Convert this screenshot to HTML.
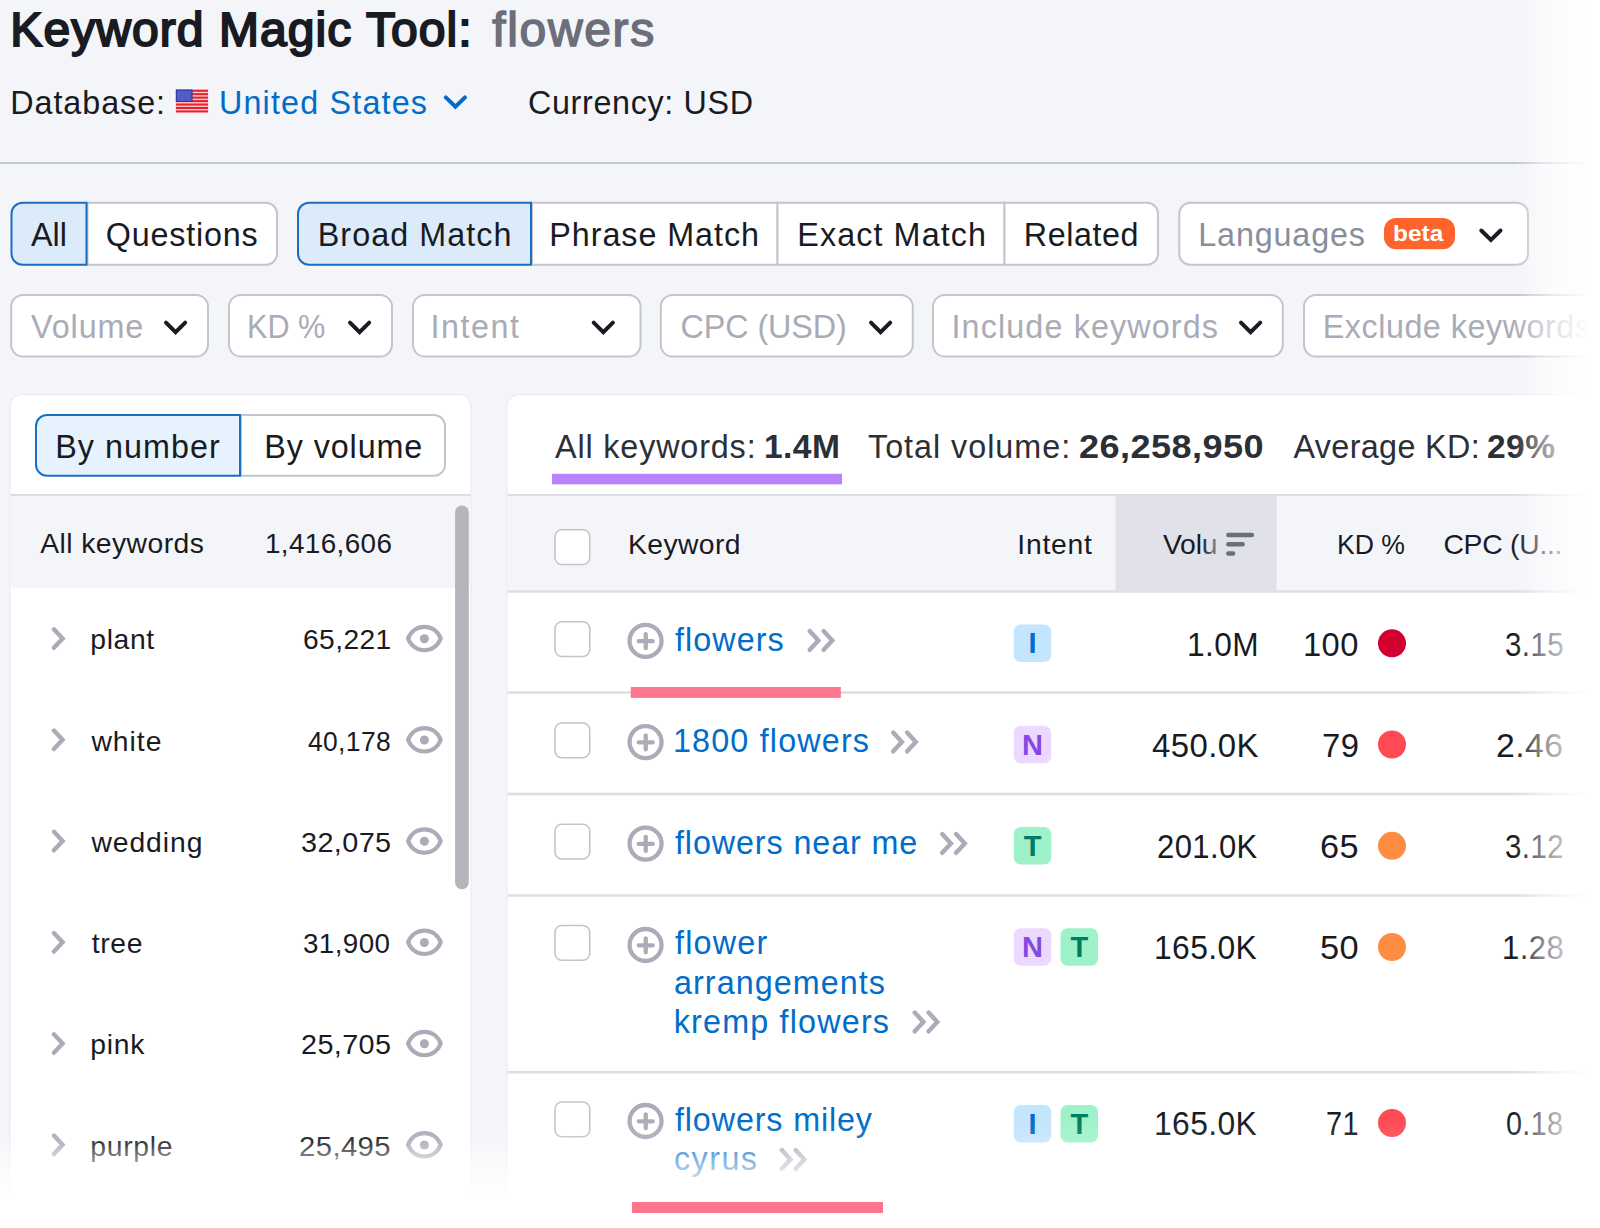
<!DOCTYPE html>
<html><head><meta charset="utf-8"><title>Keyword Magic Tool</title>
<style>
html,body{margin:0;padding:0;}
body{width:1600px;height:1228px;overflow:hidden;position:relative;background:#f4f5f9;font-family:"Liberation Sans",sans-serif;}
.t{position:absolute;white-space:nowrap;line-height:1;transform-origin:0 0;font-family:"Liberation Sans",sans-serif;}
.fr{position:absolute;left:1510px;top:0;width:90px;height:1228px;background:linear-gradient(to right,rgba(255,255,255,0) 2px,rgba(255,255,255,0.12) 12px,rgba(255,255,255,0.25) 20px,rgba(255,255,255,0.4) 27px,rgba(255,255,255,0.52) 35px,rgba(255,255,255,0.64) 45px,rgba(255,255,255,0.75) 55px,rgba(255,255,255,0.85) 65px,rgba(255,255,255,0.94) 75px,rgba(255,255,255,1) 82px,rgba(255,255,255,1) 90px);}
.fb{position:absolute;left:0;top:1115px;width:1600px;height:113px;background:linear-gradient(to bottom,rgba(255,255,255,0) 3px,rgba(255,255,255,0.05) 13px,rgba(255,255,255,0.11) 25px,rgba(255,255,255,0.19) 31px,rgba(255,255,255,0.36) 37px,rgba(255,255,255,0.5) 45px,rgba(255,255,255,0.62) 54px,rgba(255,255,255,0.74) 63px,rgba(255,255,255,0.87) 73px,rgba(255,255,255,1) 84px,rgba(255,255,255,1) 113px);}
.uf{position:absolute;left:1200px;top:528px;width:19px;height:32px;background:linear-gradient(to right,rgba(224,225,233,0) 0,rgba(224,225,233,.15) 5px,rgba(224,225,233,.62) 19px);}
.pb{position:absolute;left:631.75px;top:1202px;width:251.25px;height:11px;background:#fd768d;}
</style></head><body>
<svg width="1600" height="1228" viewBox="0 0 1600 1228" style="position:absolute;left:0;top:0"><rect x="0" y="0" width="1600" height="1228" fill="#f4f5f9"/>
<rect x="0" y="162" width="1600" height="2" fill="#c6c8d1"/>
<rect x="175.9" y="89.7" width="32.2" height="22.75" fill="#ffc9c9"/>
<rect x="175.9" y="89.70" width="32.2" height="2.05" fill="#e3222b"/>
<rect x="175.9" y="93.15" width="32.2" height="2.05" fill="#e3222b"/>
<rect x="175.9" y="96.60" width="32.2" height="2.05" fill="#e3222b"/>
<rect x="175.9" y="100.05" width="32.2" height="2.05" fill="#e3222b"/>
<rect x="175.9" y="103.50" width="32.2" height="2.05" fill="#e3222b"/>
<rect x="175.9" y="106.95" width="32.2" height="2.05" fill="#e3222b"/>
<rect x="175.9" y="110.40" width="32.2" height="2.05" fill="#e3222b"/>
<rect x="175.9" y="89.7" width="16.5" height="12.2" fill="#525dc2"/>
<rect x="176.3" y="90.10000000000001" width="15.7" height="11.4" fill="none" stroke="#2a2aa8" stroke-width="0.8"/>
<polyline points="445.8,97.3 455.4,106.77 465.0,97.3" fill="none" stroke="#006dca" stroke-width="4" stroke-linecap="round" stroke-linejoin="miter"/>
<path d="M87.5,202.7 H266.0 A11.0,11.0 0 0 1 277.0,213.7 V253.7 A11.0,11.0 0 0 1 266.0,264.7 H87.5 V202.7 Z" fill="#fff" stroke="#c3c5cd" stroke-width="2"/>
<path d="M22.5,202.7 H86.5 V264.7 H22.5 A11.0,11.0 0 0 1 11.5,253.7 V213.7 A11.0,11.0 0 0 1 22.5,202.7 Z" fill="#dcebf9" stroke="#1a6ec0" stroke-width="2"/>
<path d="M532.0,202.7 H777.5 V264.7 H532.0 V202.7 Z" fill="#fff" stroke="#c3c5cd" stroke-width="2"/>
<path d="M777.5,202.7 H1004.5 V264.7 H777.5 V202.7 Z" fill="#fff" stroke="#c3c5cd" stroke-width="2"/>
<path d="M1004.5,202.7 H1147.0 A11.0,11.0 0 0 1 1158.0,213.7 V253.7 A11.0,11.0 0 0 1 1147.0,264.7 H1004.5 V202.7 Z" fill="#fff" stroke="#c3c5cd" stroke-width="2"/>
<path d="M309.0,202.7 H531.0 V264.7 H309.0 A11.0,11.0 0 0 1 298.0,253.7 V213.7 A11.0,11.0 0 0 1 309.0,202.7 Z" fill="#dcebf9" stroke="#1a6ec0" stroke-width="2"/>
<path d="M1190.3,202.7 H1517.0 A11.0,11.0 0 0 1 1528.0,213.7 V253.7 A11.0,11.0 0 0 1 1517.0,264.7 H1190.3 A11.0,11.0 0 0 1 1179.3,253.7 V213.7 A11.0,11.0 0 0 1 1190.3,202.7 Z" fill="#fff" stroke="#c3c5cd" stroke-width="2"/>
<rect x="1384" y="218" width="71" height="31.3" rx="12" fill="#ff642d"/>
<polyline points="1481.3,230.5 1490.9,239.97 1500.5,230.5" fill="none" stroke="#191b23" stroke-width="4" stroke-linecap="round" stroke-linejoin="miter"/>
<path d="M23.2,294.9 H196.0 A12.0,12.0 0 0 1 208.0,306.9 V344.6 A12.0,12.0 0 0 1 196.0,356.6 H23.2 A12.0,12.0 0 0 1 11.2,344.6 V306.9 A12.0,12.0 0 0 1 23.2,294.9 Z" fill="#fff" stroke="#c3c5cd" stroke-width="2"/>
<path d="M241.0,294.9 H380.0 A12.0,12.0 0 0 1 392.0,306.9 V344.6 A12.0,12.0 0 0 1 380.0,356.6 H241.0 A12.0,12.0 0 0 1 229.0,344.6 V306.9 A12.0,12.0 0 0 1 241.0,294.9 Z" fill="#fff" stroke="#c3c5cd" stroke-width="2"/>
<path d="M425.0,294.9 H628.5 A12.0,12.0 0 0 1 640.5,306.9 V344.6 A12.0,12.0 0 0 1 628.5,356.6 H425.0 A12.0,12.0 0 0 1 413.0,344.6 V306.9 A12.0,12.0 0 0 1 425.0,294.9 Z" fill="#fff" stroke="#c3c5cd" stroke-width="2"/>
<path d="M672.8,294.9 H900.8 A12.0,12.0 0 0 1 912.8,306.9 V344.6 A12.0,12.0 0 0 1 900.8,356.6 H672.8 A12.0,12.0 0 0 1 660.8,344.6 V306.9 A12.0,12.0 0 0 1 672.8,294.9 Z" fill="#fff" stroke="#c3c5cd" stroke-width="2"/>
<path d="M945.0,294.9 H1270.8 A12.0,12.0 0 0 1 1282.8,306.9 V344.6 A12.0,12.0 0 0 1 1270.8,356.6 H945.0 A12.0,12.0 0 0 1 933.0,344.6 V306.9 A12.0,12.0 0 0 1 945.0,294.9 Z" fill="#fff" stroke="#c3c5cd" stroke-width="2"/>
<path d="M1316.0,294.9 H1647.0 A12.0,12.0 0 0 1 1659.0,306.9 V344.6 A12.0,12.0 0 0 1 1647.0,356.6 H1316.0 A12.0,12.0 0 0 1 1304.0,344.6 V306.9 A12.0,12.0 0 0 1 1316.0,294.9 Z" fill="#fff" stroke="#c3c5cd" stroke-width="2"/>
<polyline points="166.0,322.7 175.6,332.17 185.2,322.7" fill="none" stroke="#191b23" stroke-width="4" stroke-linecap="round" stroke-linejoin="miter"/>
<polyline points="350.0,322.7 359.6,332.17 369.2,322.7" fill="none" stroke="#191b23" stroke-width="4" stroke-linecap="round" stroke-linejoin="miter"/>
<polyline points="593.7,322.7 603.3000000000001,332.17 612.9000000000001,322.7" fill="none" stroke="#191b23" stroke-width="4" stroke-linecap="round" stroke-linejoin="miter"/>
<polyline points="871.0,322.7 880.6,332.17 890.2,322.7" fill="none" stroke="#191b23" stroke-width="4" stroke-linecap="round" stroke-linejoin="miter"/>
<polyline points="1241.0,322.7 1250.6,332.17 1260.2,322.7" fill="none" stroke="#191b23" stroke-width="4" stroke-linecap="round" stroke-linejoin="miter"/>
<rect x="10" y="394.5" width="461" height="900" rx="12" fill="#fff" stroke="#e8e9ef" stroke-width="1"/>
<path d="M241.0,415.0 H434.0 A11.0,11.0 0 0 1 445.0,426.0 V464.7 A11.0,11.0 0 0 1 434.0,475.7 H241.0 V415.0 Z" fill="#fff" stroke="#c3c5cd" stroke-width="2"/>
<path d="M47.0,415.0 H240.0 V475.7 H47.0 A11.0,11.0 0 0 1 36.0,464.7 V426.0 A11.0,11.0 0 0 1 47.0,415.0 Z" fill="#e6f3fe" stroke="#1a6ec0" stroke-width="2"/>
<rect x="10.5" y="495.5" width="460" height="92" fill="#f4f5f9"/>
<rect x="10.5" y="494" width="460" height="2" fill="#dddee4"/>
<rect x="455.1" y="505.5" width="13.7" height="383.8" rx="6.85" fill="#b4b5bb"/>
<polyline points="53.900000000000006,629.3 62.61,638.55 53.900000000000006,647.8" fill="none" stroke="#aaadb9" stroke-width="4.4" stroke-linecap="round" stroke-linejoin="miter"/>
<g transform="translate(424.4,638.55)" fill="none" stroke="#aaadb9" stroke-width="4.2" stroke-linejoin="round"><path d="M-16.3,0 C-10.5,-15.6 10.5,-15.6 16.3,0 C10.5,15.6 -10.5,15.6 -16.3,0 Z"/><circle cx="0" cy="0.2" r="4.5" fill="#aaadb9" stroke="none"/></g>
<polyline points="53.900000000000006,730.55 62.61,739.8 53.900000000000006,749.05" fill="none" stroke="#aaadb9" stroke-width="4.4" stroke-linecap="round" stroke-linejoin="miter"/>
<g transform="translate(424.4,739.8)" fill="none" stroke="#aaadb9" stroke-width="4.2" stroke-linejoin="round"><path d="M-16.3,0 C-10.5,-15.6 10.5,-15.6 16.3,0 C10.5,15.6 -10.5,15.6 -16.3,0 Z"/><circle cx="0" cy="0.2" r="4.5" fill="#aaadb9" stroke="none"/></g>
<polyline points="53.900000000000006,831.8 62.61,841.05 53.900000000000006,850.3" fill="none" stroke="#aaadb9" stroke-width="4.4" stroke-linecap="round" stroke-linejoin="miter"/>
<g transform="translate(424.4,841.05)" fill="none" stroke="#aaadb9" stroke-width="4.2" stroke-linejoin="round"><path d="M-16.3,0 C-10.5,-15.6 10.5,-15.6 16.3,0 C10.5,15.6 -10.5,15.6 -16.3,0 Z"/><circle cx="0" cy="0.2" r="4.5" fill="#aaadb9" stroke="none"/></g>
<polyline points="53.900000000000006,933.05 62.61,942.3 53.900000000000006,951.55" fill="none" stroke="#aaadb9" stroke-width="4.4" stroke-linecap="round" stroke-linejoin="miter"/>
<g transform="translate(424.4,942.3)" fill="none" stroke="#aaadb9" stroke-width="4.2" stroke-linejoin="round"><path d="M-16.3,0 C-10.5,-15.6 10.5,-15.6 16.3,0 C10.5,15.6 -10.5,15.6 -16.3,0 Z"/><circle cx="0" cy="0.2" r="4.5" fill="#aaadb9" stroke="none"/></g>
<polyline points="53.900000000000006,1034.3 62.61,1043.55 53.900000000000006,1052.8" fill="none" stroke="#aaadb9" stroke-width="4.4" stroke-linecap="round" stroke-linejoin="miter"/>
<g transform="translate(424.4,1043.55)" fill="none" stroke="#aaadb9" stroke-width="4.2" stroke-linejoin="round"><path d="M-16.3,0 C-10.5,-15.6 10.5,-15.6 16.3,0 C10.5,15.6 -10.5,15.6 -16.3,0 Z"/><circle cx="0" cy="0.2" r="4.5" fill="#aaadb9" stroke="none"/></g>
<polyline points="53.900000000000006,1135.55 62.61,1144.8 53.900000000000006,1154.05" fill="none" stroke="#aaadb9" stroke-width="4.4" stroke-linecap="round" stroke-linejoin="miter"/>
<g transform="translate(424.4,1144.8)" fill="none" stroke="#aaadb9" stroke-width="4.2" stroke-linejoin="round"><path d="M-16.3,0 C-10.5,-15.6 10.5,-15.6 16.3,0 C10.5,15.6 -10.5,15.6 -16.3,0 Z"/><circle cx="0" cy="0.2" r="4.5" fill="#aaadb9" stroke="none"/></g>
<rect x="507" y="394.5" width="1200" height="900" rx="12" fill="#fff" stroke="#e8e9ef" stroke-width="1"/>
<rect x="552" y="473.8" width="290" height="10.5" fill="#b882fb"/>
<rect x="507.5" y="495.5" width="1100" height="95" fill="#f4f5f9"/>
<rect x="1115.5" y="495.5" width="161.2" height="95" fill="#e0e1e9"/>
<rect x="507.5" y="494" width="1100" height="2" fill="#dddee4"/>
<rect x="507.5" y="590.2" width="1100" height="2.6" fill="#dedfe5"/>
<rect x="507.5" y="691.2" width="1100" height="2.6" fill="#dedfe5"/>
<rect x="507.5" y="792.7" width="1100" height="2.6" fill="#dedfe5"/>
<rect x="507.5" y="894.2" width="1100" height="2.6" fill="#dedfe5"/>
<rect x="507.5" y="1070.95" width="1100" height="2.6" fill="#dedfe5"/>
<line x1="1228.35" y1="535" x2="1251.85" y2="535" stroke="#6c6e79" stroke-width="4.5" stroke-linecap="round"/>
<line x1="1228.35" y1="544.15" x2="1242.65" y2="544.15" stroke="#6c6e79" stroke-width="4.5" stroke-linecap="round"/>
<line x1="1228.35" y1="553.4" x2="1233.05" y2="553.4" stroke="#6c6e79" stroke-width="4.5" stroke-linecap="round"/>
<rect x="555" y="529.75" width="34.75" height="34.75" rx="7" fill="#fff" stroke="#c3c5cd" stroke-width="1.6"/>
<rect x="555" y="621.75" width="34.75" height="34.75" rx="7" fill="#fff" stroke="#c3c5cd" stroke-width="1.6"/>
<rect x="555" y="723" width="34.75" height="34.75" rx="7" fill="#fff" stroke="#c3c5cd" stroke-width="1.6"/>
<rect x="555" y="824.25" width="34.75" height="34.75" rx="7" fill="#fff" stroke="#c3c5cd" stroke-width="1.6"/>
<rect x="555" y="925.5" width="34.75" height="34.75" rx="7" fill="#fff" stroke="#c3c5cd" stroke-width="1.6"/>
<rect x="555" y="1102" width="34.75" height="34.75" rx="7" fill="#fff" stroke="#c3c5cd" stroke-width="1.6"/>
<g stroke="#aaadb9" stroke-width="4.3" fill="none" stroke-linecap="round"><circle cx="645.55" cy="640.9" r="16.0"/><path d="M638.75,641.1999999999999 H652.75 M645.75,634.1999999999999 V648.1999999999999"/></g>
<g stroke="#aaadb9" stroke-width="4.3" fill="none" stroke-linecap="round"><circle cx="645.55" cy="742.1" r="16.0"/><path d="M638.75,742.4 H652.75 M645.75,735.4 V749.4"/></g>
<g stroke="#aaadb9" stroke-width="4.3" fill="none" stroke-linecap="round"><circle cx="645.55" cy="843.6" r="16.0"/><path d="M638.75,843.9 H652.75 M645.75,836.9 V850.9"/></g>
<g stroke="#aaadb9" stroke-width="4.3" fill="none" stroke-linecap="round"><circle cx="645.55" cy="945" r="16.0"/><path d="M638.75,945.3 H652.75 M645.75,938.3 V952.3"/></g>
<g stroke="#aaadb9" stroke-width="4.3" fill="none" stroke-linecap="round"><circle cx="645.55" cy="1121" r="16.0"/><path d="M638.75,1121.3 H652.75 M645.75,1114.3 V1128.3"/></g>
<polyline points="809.7,631.0 818.41,640.4 809.7,649.8" fill="none" stroke="#aaadb9" stroke-width="4.4" stroke-linecap="round" stroke-linejoin="miter"/>
<polyline points="823.6,631.0 832.31,640.4 823.6,649.8" fill="none" stroke="#aaadb9" stroke-width="4.4" stroke-linecap="round" stroke-linejoin="miter"/>
<polyline points="893.2,732.5 901.91,741.9 893.2,751.3" fill="none" stroke="#aaadb9" stroke-width="4.4" stroke-linecap="round" stroke-linejoin="miter"/>
<polyline points="907.1,732.5 915.81,741.9 907.1,751.3" fill="none" stroke="#aaadb9" stroke-width="4.4" stroke-linecap="round" stroke-linejoin="miter"/>
<polyline points="942.2,834.0 950.91,843.4 942.2,852.8" fill="none" stroke="#aaadb9" stroke-width="4.4" stroke-linecap="round" stroke-linejoin="miter"/>
<polyline points="956.1,834.0 964.81,843.4 956.1,852.8" fill="none" stroke="#aaadb9" stroke-width="4.4" stroke-linecap="round" stroke-linejoin="miter"/>
<polyline points="914.7,1012.5 923.41,1021.9 914.7,1031.3" fill="none" stroke="#aaadb9" stroke-width="4.4" stroke-linecap="round" stroke-linejoin="miter"/>
<polyline points="928.6,1012.5 937.31,1021.9 928.6,1031.3" fill="none" stroke="#aaadb9" stroke-width="4.4" stroke-linecap="round" stroke-linejoin="miter"/>
<polyline points="781.7,1150.0 790.41,1159.4 781.7,1168.8" fill="none" stroke="#aaadb9" stroke-width="4.4" stroke-linecap="round" stroke-linejoin="miter"/>
<polyline points="795.6,1150.0 804.31,1159.4 795.6,1168.8" fill="none" stroke="#aaadb9" stroke-width="4.4" stroke-linecap="round" stroke-linejoin="miter"/>
<rect x="1013.75" y="624.5" width="37.5" height="37.5" rx="7" fill="#c4e5fe"/>
<text x="1032.5" y="653.4" text-anchor="middle" font-family="Liberation Sans, sans-serif" font-weight="700" font-size="29" fill="#006dca">I</text>
<rect x="1013.75" y="725.75" width="37.5" height="37.5" rx="7" fill="#edd9ff"/>
<text x="1032.5" y="754.65" text-anchor="middle" font-family="Liberation Sans, sans-serif" font-weight="700" font-size="29" fill="#8649e1">N</text>
<rect x="1013.75" y="827" width="37.5" height="37.5" rx="7" fill="#9ef2c9"/>
<text x="1032.5" y="855.9" text-anchor="middle" font-family="Liberation Sans, sans-serif" font-weight="700" font-size="29" fill="#007c65">T</text>
<rect x="1013.75" y="928.25" width="37.5" height="37.5" rx="7" fill="#edd9ff"/>
<text x="1032.5" y="957.15" text-anchor="middle" font-family="Liberation Sans, sans-serif" font-weight="700" font-size="29" fill="#8649e1">N</text>
<rect x="1060.5" y="928.25" width="37.5" height="37.5" rx="7" fill="#9ef2c9"/>
<text x="1079.25" y="957.15" text-anchor="middle" font-family="Liberation Sans, sans-serif" font-weight="700" font-size="29" fill="#007c65">T</text>
<rect x="1013.75" y="1105" width="37.5" height="37.5" rx="7" fill="#c4e5fe"/>
<text x="1032.5" y="1133.9" text-anchor="middle" font-family="Liberation Sans, sans-serif" font-weight="700" font-size="29" fill="#006dca">I</text>
<rect x="1060.5" y="1105" width="37.5" height="37.5" rx="7" fill="#9ef2c9"/>
<text x="1079.25" y="1133.9" text-anchor="middle" font-family="Liberation Sans, sans-serif" font-weight="700" font-size="29" fill="#007c65">T</text>
<circle cx="1392" cy="643.3" r="14" fill="#d1002f"/>
<circle cx="1392" cy="744.5" r="14" fill="#ff4953"/>
<circle cx="1392" cy="845.8" r="14" fill="#ff8c43"/>
<circle cx="1392" cy="947" r="14" fill="#ff8c43"/>
<circle cx="1392" cy="1123" r="14" fill="#ff4953"/>
<rect x="630.75" y="687" width="210.1" height="10.9" fill="#fd768d"/></svg>
<div class="t" style="left:10.35px;top:6.22px;font-size:48px;letter-spacing:1.074px;color:#191b23;-webkit-text-stroke:2.0px #191b23;">Keyword Magic Tool:</div>
<div class="t" style="left:492.30px;top:6.02px;font-size:48px;letter-spacing:1.643px;color:#6c6e79;-webkit-text-stroke:1.5px #6c6e79;">flowers</div>
<div class="t" style="left:10.28px;top:87.31px;font-size:32.3px;letter-spacing:0.950px;color:#191b23;">Database:</div>
<div class="t" style="left:218.98px;top:87.31px;font-size:32.3px;letter-spacing:1.176px;color:#006dca;">United States</div>
<div class="t" style="left:527.99px;top:87.31px;font-size:32.3px;letter-spacing:0.663px;color:#191b23;">Currency: USD</div>
<div class="t" style="left:31.04px;top:218.61px;font-size:32.3px;letter-spacing:-0.053px;color:#191b23;">All</div>
<div class="t" style="left:105.79px;top:218.61px;font-size:32.3px;letter-spacing:0.812px;color:#191b23;">Questions</div>
<div class="t" style="left:317.78px;top:218.61px;font-size:32.3px;letter-spacing:1.061px;color:#191b23;">Broad Match</div>
<div class="t" style="left:549.28px;top:218.61px;font-size:32.3px;letter-spacing:0.951px;color:#191b23;">Phrase Match</div>
<div class="t" style="left:797.28px;top:218.61px;font-size:32.3px;letter-spacing:1.102px;color:#191b23;">Exact Match</div>
<div class="t" style="left:1023.78px;top:218.61px;font-size:32.3px;letter-spacing:0.568px;color:#191b23;">Related</div>
<div class="t" style="left:1198.28px;top:218.61px;font-size:32.3px;letter-spacing:0.859px;color:#8a8e9b;">Languages</div>
<div class="t" style="left:1392.78px;top:222.60px;font-size:22.5px;letter-spacing:0.000px;color:#ffffff;transform:scaleX(1.0863);font-weight:700;">beta</div>
<div class="t" style="left:31.00px;top:310.61px;font-size:32.3px;letter-spacing:0.915px;color:#a9abb6;">Volume</div>
<div class="t" style="left:246.57px;top:310.61px;font-size:32.3px;letter-spacing:0.000px;color:#a9abb6;transform:scaleX(0.9486);">KD %</div>
<div class="t" style="left:430.48px;top:310.61px;font-size:32.3px;letter-spacing:1.520px;color:#a9abb6;">Intent</div>
<div class="t" style="left:680.49px;top:310.61px;font-size:32.3px;letter-spacing:-0.062px;color:#a9abb6;">CPC (USD)</div>
<div class="t" style="left:951.48px;top:310.61px;font-size:32.3px;letter-spacing:1.132px;color:#a9abb6;">Include keywords</div>
<div class="t" style="left:1322.78px;top:310.61px;font-size:32.3px;letter-spacing:0.528px;color:#a9abb6;">Exclude keywords</div>
<div class="t" style="left:55.28px;top:430.61px;font-size:32.3px;letter-spacing:1.025px;color:#191b23;">By number</div>
<div class="t" style="left:264.28px;top:430.61px;font-size:32.3px;letter-spacing:0.905px;color:#191b23;">By volume</div>
<div class="t" style="left:40.25px;top:529.39px;font-size:28.3px;letter-spacing:0.433px;color:#191b23;">All keywords</div>
<div class="t" style="left:264.79px;top:529.39px;font-size:28.3px;letter-spacing:0.400px;color:#191b23;transform:scaleX(0.9831);">1,416,606</div>
<div class="t" style="left:90.30px;top:625.29px;font-size:28.3px;letter-spacing:0.632px;color:#191b23;">plant</div>
<div class="t" style="left:303.13px;top:625.29px;font-size:28.3px;letter-spacing:0.400px;color:#191b23;transform:scaleX(0.9963);">65,221</div>
<div class="t" style="left:91.38px;top:726.54px;font-size:28.3px;letter-spacing:1.000px;color:#191b23;">white</div>
<div class="t" style="left:307.71px;top:726.54px;font-size:28.3px;letter-spacing:0.400px;color:#191b23;transform:scaleX(0.9333);">40,178</div>
<div class="t" style="left:91.38px;top:827.79px;font-size:28.3px;letter-spacing:0.941px;color:#191b23;">wedding</div>
<div class="t" style="left:300.98px;top:827.79px;font-size:28.3px;letter-spacing:0.400px;color:#191b23;transform:scaleX(1.0180);">32,075</div>
<div class="t" style="left:91.68px;top:929.04px;font-size:28.3px;letter-spacing:0.667px;color:#191b23;">tree</div>
<div class="t" style="left:303.01px;top:929.04px;font-size:28.3px;letter-spacing:0.400px;color:#191b23;transform:scaleX(0.9820);">31,900</div>
<div class="t" style="left:90.30px;top:1030.29px;font-size:28.3px;letter-spacing:0.729px;color:#191b23;">pink</div>
<div class="t" style="left:301.10px;top:1030.29px;font-size:28.3px;letter-spacing:0.400px;color:#191b23;transform:scaleX(1.0167);">25,705</div>
<div class="t" style="left:90.30px;top:1131.54px;font-size:28.3px;letter-spacing:0.695px;color:#191b23;">purple</div>
<div class="t" style="left:298.56px;top:1131.54px;font-size:28.3px;letter-spacing:0.400px;color:#191b23;transform:scaleX(1.0342);">25,495</div>
<div class="t" style="left:555.00px;top:430.61px;font-size:32.3px;letter-spacing:0.863px;color:#2d2f36;">All keywords:</div>
<div class="t" style="left:763.66px;top:430.61px;font-size:32.3px;letter-spacing:0.400px;color:#2d2f36;transform:scaleX(1.0391);font-weight:700;">1.4M</div>
<div class="t" style="left:868.00px;top:430.61px;font-size:32.3px;letter-spacing:0.985px;color:#2d2f36;">Total volume:</div>
<div class="t" style="left:1078.87px;top:430.61px;font-size:32.3px;letter-spacing:0.400px;color:#2d2f36;transform:scaleX(1.1170);font-weight:700;">26,258,950</div>
<div class="t" style="left:1293.50px;top:430.61px;font-size:32.3px;letter-spacing:0.358px;color:#2d2f36;">Average KD:</div>
<div class="t" style="left:1487.45px;top:430.61px;font-size:32.3px;letter-spacing:0.400px;color:#2d2f36;transform:scaleX(1.0394);font-weight:700;">29%</div>
<div class="t" style="left:628.05px;top:530.49px;font-size:28.3px;letter-spacing:0.381px;color:#191b23;">Keyword</div>
<div class="t" style="left:1017.30px;top:530.49px;font-size:28.3px;letter-spacing:0.742px;color:#191b23;">Intent</div>
<div class="t" style="left:1162.88px;top:530.49px;font-size:28.3px;letter-spacing:-0.130px;color:#191b23;">Volu</div>
<div class="t" style="left:1337.14px;top:530.49px;font-size:28.3px;letter-spacing:0.000px;color:#191b23;transform:scaleX(0.9401);">KD %</div>
<div class="t" style="left:1443.42px;top:530.49px;font-size:28.3px;letter-spacing:-0.249px;color:#191b23;">CPC (U...</div>
<div class="t" style="left:675.00px;top:623.86px;font-size:32.3px;letter-spacing:1.067px;color:#006dca;">flowers</div>
<div class="t" style="left:672.98px;top:725.11px;font-size:32.3px;letter-spacing:1.172px;color:#006dca;">1800 flowers</div>
<div class="t" style="left:675.00px;top:826.86px;font-size:32.3px;letter-spacing:0.895px;color:#006dca;">flowers near me</div>
<div class="t" style="left:675.00px;top:927.36px;font-size:32.3px;letter-spacing:1.200px;color:#006dca;">flower</div>
<div class="t" style="left:673.99px;top:966.61px;font-size:32.3px;letter-spacing:1.066px;color:#006dca;">arrangements</div>
<div class="t" style="left:673.78px;top:1005.61px;font-size:32.3px;letter-spacing:1.184px;color:#006dca;">kremp flowers</div>
<div class="t" style="left:675.00px;top:1104.11px;font-size:32.3px;letter-spacing:0.862px;color:#006dca;">flowers miley</div>
<div class="t" style="left:673.99px;top:1142.61px;font-size:32.3px;letter-spacing:1.462px;color:#006dca;">cyrus</div>
<div class="t" style="left:1187.27px;top:628.61px;font-size:32.3px;letter-spacing:0.400px;color:#191b23;transform:scaleX(0.9809);">1.0M</div>
<div class="t" style="left:1303.46px;top:628.61px;font-size:32.3px;letter-spacing:0.400px;color:#191b23;transform:scaleX(1.0122);">100</div>
<div class="t" style="left:1505.08px;top:628.61px;font-size:32.3px;letter-spacing:0.400px;color:#191b23;transform:scaleX(0.9150);">3.15</div>
<div class="t" style="left:1151.54px;top:729.86px;font-size:32.3px;letter-spacing:0.400px;color:#191b23;transform:scaleX(1.0191);">450.0K</div>
<div class="t" style="left:1321.70px;top:729.86px;font-size:32.3px;letter-spacing:0.400px;color:#191b23;transform:scaleX(1.0166);">79</div>
<div class="t" style="left:1496.18px;top:729.86px;font-size:32.3px;letter-spacing:0.400px;color:#191b23;transform:scaleX(1.0456);">2.46</div>
<div class="t" style="left:1156.83px;top:830.61px;font-size:32.3px;letter-spacing:0.400px;color:#191b23;transform:scaleX(0.9609);">201.0K</div>
<div class="t" style="left:1320.39px;top:830.61px;font-size:32.3px;letter-spacing:0.400px;color:#191b23;transform:scaleX(1.0608);">65</div>
<div class="t" style="left:1505.08px;top:830.61px;font-size:32.3px;letter-spacing:0.400px;color:#191b23;transform:scaleX(0.9150);">3.12</div>
<div class="t" style="left:1154.26px;top:932.36px;font-size:32.3px;letter-spacing:0.400px;color:#191b23;transform:scaleX(0.9852);">165.0K</div>
<div class="t" style="left:1320.18px;top:932.36px;font-size:32.3px;letter-spacing:0.400px;color:#191b23;transform:scaleX(1.0648);">50</div>
<div class="t" style="left:1502.06px;top:932.36px;font-size:32.3px;letter-spacing:0.400px;color:#191b23;transform:scaleX(0.9632);">1.28</div>
<div class="t" style="left:1154.26px;top:1108.11px;font-size:32.3px;letter-spacing:0.400px;color:#191b23;transform:scaleX(0.9852);">165.0K</div>
<div class="t" style="left:1325.60px;top:1108.11px;font-size:32.3px;letter-spacing:0.400px;color:#191b23;transform:scaleX(0.8963);">71</div>
<div class="t" style="left:1505.88px;top:1108.11px;font-size:32.3px;letter-spacing:0.400px;color:#191b23;transform:scaleX(0.8914);">0.18</div>
<div class="uf"></div><div class="fr"></div><div class="fb"></div><div class="pb"></div>
</body></html>
